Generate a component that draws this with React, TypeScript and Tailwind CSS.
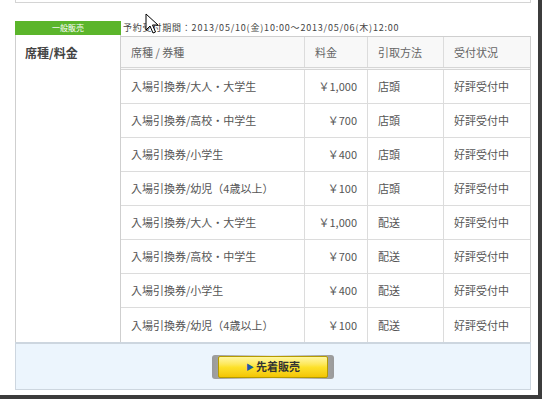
const rows = [
  { name: '入場引換券/大人・大学生', price: '￥1,000', method: '店頭' },
  { name: '入場引換券/高校・中学生', price: '￥700', method: '店頭' },
  { name: '入場引換券/小学生', price: '￥400', method: '店頭' },
  { name: '入場引換券/幼児（4歳以上）', price: '￥100', method: '店頭' },
  { name: '入場引換券/大人・大学生', price: '￥1,000', method: '配送' },
  { name: '入場引換券/高校・中学生', price: '￥700', method: '配送' },
  { name: '入場引換券/小学生', price: '￥400', method: '配送' },
  { name: '入場引換券/幼児（4歳以上）', price: '￥100', method: '配送' },
];

const font = { fontFamily: '"Noto Sans CJK JP", "Noto Sans", sans-serif' };

const Cursor = () => (
  <svg className="absolute left-[145px] top-[13px]" width="14" height="22" viewBox="0 0 14 22">
    <path d="M1 1 L1 17 L5 13 L8 20 L10.5 19 L7.5 12 L13 12 Z" fill="#fff" stroke="#000" strokeWidth="1" strokeLinejoin="round" />
  </svg>
);

export default function App() {
  return (
    <div className="w-[544px] h-[400px] bg-white relative overflow-hidden" style={font}>
      <div className="w-[542px] h-[399px] border-r-[4px] border-b-[4px] border-[#3c3c3c] bg-white flex flex-col">
        <div className="mx-[15px] w-[516px] h-[3px] border-x border-b border-[#d4d4d4]" />

        <div className="mx-[15px] mt-[18px] w-[516px] flex items-end">
          <div className="w-[106px] h-[14px] bg-[#5bb52b] text-white text-[8px] leading-[14px] text-center">一般販売</div>
          <div className="ml-[2px] pb-[1px] text-[9px] leading-[12px] tracking-[0.8px] text-[#444]">予約受付期間：2013/05/10(金)10:00～2013/05/06(木)12:00</div>
        </div>

        <div className="mx-[15px] w-[516px] flex">
          <div className="w-[106px] border-l border-r border-[#cfcfcf] pl-[9px] pt-[9px] text-[12px] font-bold text-[#444]">席種/料金</div>
          <div className="flex-1 mt-[1px] border-t border-r border-[#cfcfcf] text-[11px] text-[#555]">
            <div className="flex h-[33px] items-center bg-[#f8f8f8] border-b-[3px] border-double border-[#d6d6d6] text-[#666]">
              <div className="w-[184px] pl-[10px] border-r border-[#dcdcdc] h-full flex items-center">席種 / 券種</div>
              <div className="w-[63px] pl-[10px] border-r border-[#dcdcdc] h-full flex items-center">料金</div>
              <div className="w-[76px] pl-[10px] border-r border-[#dcdcdc] h-full flex items-center">引取方法</div>
              <div className="flex-1 pl-[10px] h-full flex items-center">受付状況</div>
            </div>
            {rows.map((r, i) => (
              <div key={i} className="flex h-[34px] items-center border-b border-[#dcdcdc] last:border-b-0">
                <div className="w-[184px] pl-[10px] border-r border-[#dcdcdc] h-full flex items-center">{r.name}</div>
                <div className="w-[63px] pr-[10px] border-r border-[#dcdcdc] h-full flex items-center justify-end">{r.price}</div>
                <div className="w-[76px] pl-[10px] border-r border-[#dcdcdc] h-full flex items-center">{r.method}</div>
                <div className="flex-1 pl-[10px] h-full flex items-center">好評受付中</div>
              </div>
            ))}
          </div>
        </div>

        <div className="mx-[15px] w-[516px] h-[48px] border border-t-[2px] border-[#cdd6df] bg-[#ecf5fd] flex items-center justify-center">
          <div className="rounded-[3px] bg-gradient-to-r from-[#9a9a9a] via-[#e6e6e6] to-[#9a9a9a] px-[6px] py-[1px]">
            <div className="w-[110px] h-[22px] rounded-[2px] border border-[#b59b00] bg-gradient-to-b from-[#fff7a0] via-[#fde22a] to-[#f3c500] flex items-center justify-center text-[11px] font-bold text-[#333]">
              <span className="text-[#1e5aa8] text-[8px] mr-[2px]">▶</span>先着販売
            </div>
          </div>
        </div>
      </div>
      <Cursor />
    </div>
  );
}
